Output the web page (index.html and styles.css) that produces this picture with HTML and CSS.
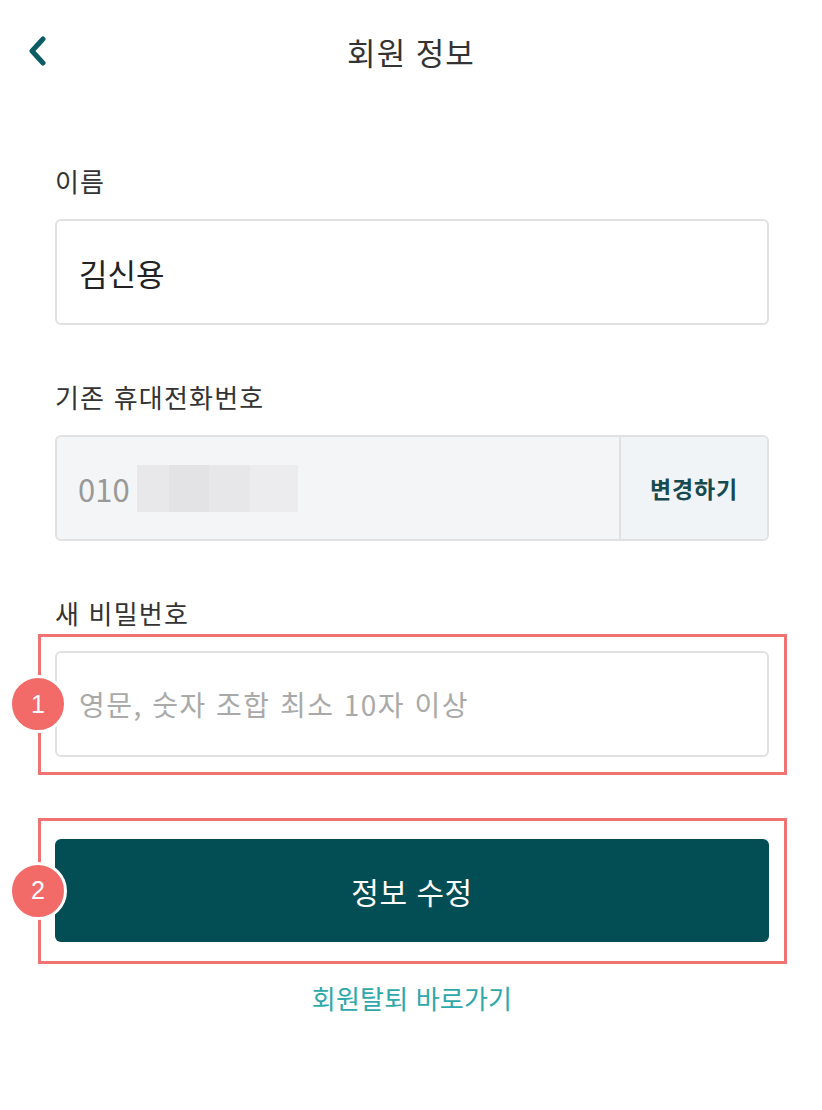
FILE: index.html
```html
<!DOCTYPE html>
<html lang="ko">
<head>
<meta charset="utf-8">
<title>회원 정보</title>
<link rel="stylesheet" href="styles.css">
</head>
<body>
<div class="page">
  <header class="topbar">
    <button class="back" aria-label="뒤로">
      <svg width="22" height="30" viewBox="0 0 22 30"><path d="M16 3 L5 15 L16 27" fill="none" stroke="#0b5c64" stroke-width="5" stroke-linecap="round" stroke-linejoin="round"/></svg>
    </button>
    <h1 class="title">회원 정보</h1>
  </header>

  <main class="form">
    <section class="field">
      <div class="label">이름</div>
      <div class="input"><span class="value">김신용</span></div>
    </section>

    <section class="field">
      <div class="label">기존 휴대전화번호</div>
      <div class="input phone">
        <div class="phone-value"><span class="muted">010</span><span class="blur"></span></div>
        <button class="change">변경하기</button>
      </div>
    </section>

    <section class="field">
      <div class="label">새 비밀번호</div>
      <div class="annotated">
        <div class="input"><span class="placeholder">영문, 숫자 조합 최소 10자 이상</span></div>
        <div class="mark mark-1"></div>
        <div class="badge">1</div>
      </div>
    </section>

    <div class="annotated submit-wrap">
      <button class="submit">정보 수정</button>
      <div class="mark mark-2"></div>
      <div class="badge">2</div>
    </div>

    <a class="leave" href="#">회원탈퇴 바로가기</a>
  </main>
</div>
</body>
</html>
```

FILE: styles.css
```css
* { box-sizing: border-box; }
html, body { margin: 0; padding: 0; background: #fff; }
body {
  font-family: "Noto Sans CJK KR", "Noto Sans", sans-serif;
  color: #333;
}
.page { width: 822px; min-height: 1110px; }

.topbar {
  height: 104px;
  display: flex;
  align-items: center;
  justify-content: center;
  position: relative;
}
.back {
  position: absolute;
  left: 27px;
  top: 36px;
  border: 0;
  background: none;
  padding: 0;
  display: flex;
}
.title {
  margin: 0;
  font-size: 31px;
  letter-spacing: 1px;
  font-weight: 400;
  color: #333;
  line-height: 40px;
}

.form {
  padding: 62px 53px 0 55px;
  display: flex;
  flex-direction: column;
}
.field { display: flex; flex-direction: column; margin-bottom: 57px; }
.field:nth-child(3) { margin-bottom: 82px; }
.label {
  font-size: 26px;
  letter-spacing: 1.2px;
  line-height: 30px;
  color: #333;
  margin-bottom: 23px;
}
.input {
  height: 106px;
  border: 2px solid #e1e1e1;
  border-radius: 6px;
  display: flex;
  align-items: center;
  padding-left: 22px;
  background: #fff;
}
.value { font-size: 31px; color: #222; }
.placeholder { font-size: 28px; letter-spacing: 1.5px; color: #a9a9a9; }

.phone {
  background: #f4f5f7;
  padding: 0;
  overflow: hidden;
}
.phone-value {
  flex: 1;
  display: flex;
  align-items: center;
  padding-left: 21px;
  height: 100%;
}
.muted { font-size: 31px; color: #999; }
.blur {
  width: 161px;
  height: 47px;
  margin-left: 7px;
  background:
    linear-gradient(90deg, #e8e8eb 0 20%, #e3e3e6 20% 45%, #e7e7ea 45% 70%, #ececee 70% 100%);
}
.change {
  width: 148px;
  height: 100%;
  border: 0;
  border-left: 2px solid #e1e1e1;
  background: #f1f4f6;
  font-family: inherit;
  font-size: 23px;
  letter-spacing: 0.8px;
  font-weight: 700;
  color: #174a50;
}

.annotated { position: relative; }
.mark {
  position: absolute;
  border: 3px solid #f07373;
  pointer-events: none;
}
.mark-1 { top: -17px; bottom: -18px; left: -17px; right: -18px; }
.mark-2 { top: -21px; bottom: -22px; left: -17px; right: -18px; }
.badge {
  position: absolute;
  left: -46px;
  top: 50%;
  margin-top: -29px;
  width: 58px;
  height: 58px;
  border-radius: 50%;
  border: 3px solid #fff;
  background: #f26b69;
  color: #fff;
  font-family: "Liberation Sans", Arial, sans-serif;
  font-size: 25px;
  display: flex;
  align-items: center;
  justify-content: center;
  z-index: 2;
}

.submit {
  width: 100%;
  height: 103px;
  border: 0;
  border-radius: 6px;
  background: #034d55;
  color: #fff;
  font-family: inherit;
  font-size: 30px;
  letter-spacing: 0.5px;
  display: block;
}

.leave {
  margin-top: 41px;
  align-self: center;
  font-size: 26px;
  letter-spacing: 0.2px;
  line-height: 30px;
  color: #2ea8aa;
  text-decoration: none;
}
```
